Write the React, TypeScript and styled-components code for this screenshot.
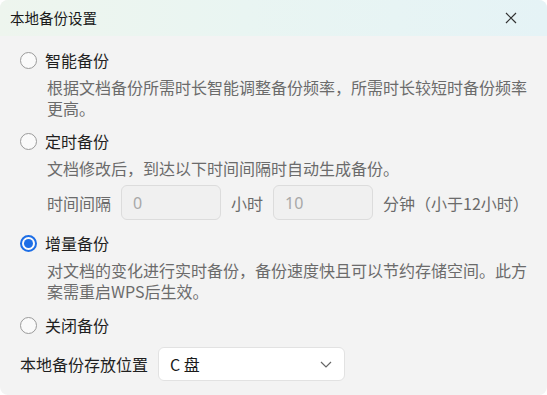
import React, { useState } from "react";
import styled, { createGlobalStyle } from "styled-components";

const GlobalStyle = createGlobalStyle`
  html, body {
    margin: 0;
    padding: 0;
    background: #ffffff;
  }
  body {
    font-family: "Noto Sans CJK SC", "Noto Sans", sans-serif;
  }
`;

const Dialog = styled.div`
  width: 547px;
  height: 395px;
  box-sizing: border-box;
  background: #f3f3f3;
  border-radius: 8px;
  overflow: hidden;
  display: flex;
  flex-direction: column;
`;

const Header = styled.div`
  height: 36px;
  flex-shrink: 0;
  display: flex;
  align-items: center;
  justify-content: space-between;
  padding: 0 29px 0 10px;
  background: linear-gradient(90deg, #eef5ee 0%, #e9f5f2 45%, #e5f3f6 100%);
`;

const Title = styled.div`
  font-size: 14.5px;
  color: #1a1a1a;
  line-height: 20px;
`;

const CloseButton = styled.button`
  border: none;
  background: none;
  padding: 0;
  width: 14px;
  height: 14px;
  display: flex;
  align-items: center;
  justify-content: center;
  cursor: pointer;
`;

const Body = styled.div`
  padding: 12px 20px 0 20px;
  display: flex;
  flex-direction: column;
`;

const Option = styled.div<{ $gap: number }>`
  display: flex;
  flex-direction: column;
  margin-bottom: ${({ $gap }) => $gap}px;
`;

const RadioRow = styled.label`
  display: flex;
  align-items: center;
  height: 24px;
  gap: 8px;
  cursor: pointer;
  font-size: 16px;
  color: #1f1f1f;
`;

const RadioCircle = styled.span<{ $checked: boolean }>`
  width: 17px;
  height: 17px;
  box-sizing: border-box;
  border-radius: 50%;
  border: ${({ $checked }) => ($checked ? "2px solid #1d6ee6" : "1.5px solid #9a9a9a")};
  background: #fafafa;
  display: flex;
  align-items: center;
  justify-content: center;
  &::after {
    content: "";
    width: 9px;
    height: 9px;
    border-radius: 50%;
    background: #1d6ee6;
    display: ${({ $checked }) => ($checked ? "block" : "none")};
  }
`;

const Desc = styled.div`
  margin-top: 5px;
  padding-left: 27px;
  font-size: 16px;
  line-height: 21px;
  color: #6b6b6b;
  white-space: nowrap;
`;

const DescLine = styled.div`
  height: 21px;
`;

const IntervalRow = styled.div`
  display: flex;
  align-items: center;
  margin-top: 6px;
  padding-left: 27px;
  font-size: 16px;
  color: #6b6b6b;
  gap: 10px;
  white-space: nowrap;
`;

const RowText = styled.span`
  flex-shrink: 0;
  white-space: nowrap;
`;

const NumberBox = styled.input`
  flex-shrink: 0;
  width: 100px;
  height: 35px;
  box-sizing: border-box;
  border: 1px solid #dcdcdc;
  border-radius: 6px;
  background: #f0f0f0;
  padding: 0 11px;
  font-family: "Noto Sans", sans-serif;
  font-size: 16px;
  color: #a8a8a8;
  outline: none;
`;

const LocationRow = styled.div`
  display: flex;
  align-items: center;
  gap: 10px;
  font-size: 16px;
  color: #1f1f1f;
  white-space: nowrap;
`;

const Select = styled.div`
  flex-shrink: 0;
  width: 187px;
  height: 34px;
  box-sizing: border-box;
  background: #ffffff;
  border: 1px solid #e2e2e2;
  border-radius: 6px;
  display: flex;
  align-items: center;
  justify-content: space-between;
  padding: 0 12px 0 11px;
  font-size: 16px;
  color: #1a1a1a;
`;

type Mode = "smart" | "timed" | "incremental" | "off";

const options: { key: Mode; label: string; desc?: string[]; gap: number }[] = [
  {
    key: "smart",
    label: "智能备份",
    desc: [
      "根据文档备份所需时长智能调整备份频率，所需时长较短时备份频率",
      "更高。",
    ],
    gap: 10,
  },
  { key: "timed", label: "定时备份", desc: ["文档修改后，到达以下时间间隔时自动生成备份。"], gap: 11 },
  {
    key: "incremental",
    label: "增量备份",
    desc: [
      "对文档的变化进行实时备份，备份速度快且可以节约存储空间。此方",
      "案需重启WPS后生效。",
    ],
    gap: 11,
  },
  { key: "off", label: "关闭备份", gap: 10 },
];

export default function App() {
  const [mode, setMode] = useState<Mode>("incremental");
  return (
    <>
      <GlobalStyle />
      <Dialog>
        <Header>
          <Title>本地备份设置</Title>
          <CloseButton aria-label="关闭">
            <svg width="12" height="12" viewBox="0 0 12 12">
              <path d="M1 1L11 11M11 1L1 11" stroke="#333" strokeWidth="1.2" fill="none" />
            </svg>
          </CloseButton>
        </Header>
        <Body>
          {options.map((opt) => (
            <Option key={opt.key} $gap={opt.gap}>
              <RadioRow onClick={() => setMode(opt.key)}>
                <RadioCircle $checked={mode === opt.key} />
                {opt.label}
              </RadioRow>
              {opt.desc && (
                <Desc>
                  {opt.desc.map((line) => (
                    <DescLine key={line}>{line}</DescLine>
                  ))}
                </Desc>
              )}
              {opt.key === "timed" && (
                <IntervalRow>
                  <RowText>时间间隔</RowText>
                  <NumberBox defaultValue="0" disabled />
                  <RowText>小时</RowText>
                  <NumberBox defaultValue="10" disabled />
                  <RowText>分钟（小于12小时）</RowText>
                </IntervalRow>
              )}
            </Option>
          ))}
          <LocationRow>
            <RowText>本地备份存放位置</RowText>
            <Select>
              C 盘
              <svg width="12" height="7" viewBox="0 0 12 7">
                <path d="M1 1L6 6L11 1" stroke="#666" strokeWidth="1.2" fill="none" />
              </svg>
            </Select>
          </LocationRow>
        </Body>
      </Dialog>
    </>
  );
}
